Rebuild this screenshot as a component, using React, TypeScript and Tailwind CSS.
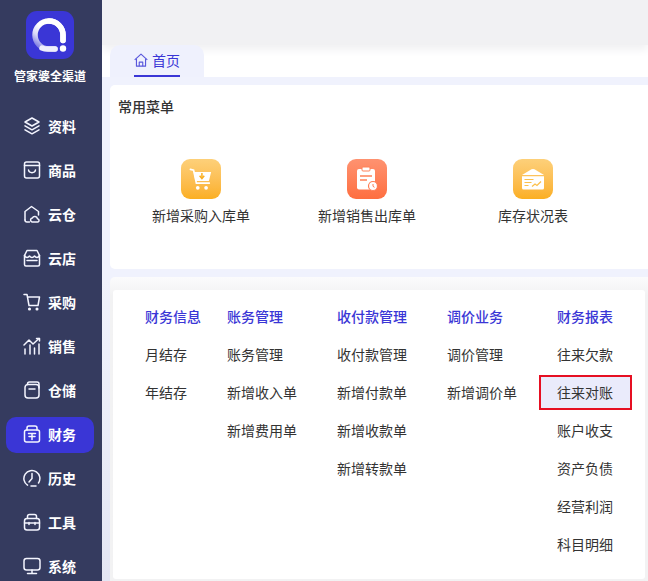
import React from "react";

const font = { fontFamily: '"Noto Sans CJK SC", sans-serif' };

const S = ({ children }: { children: React.ReactNode }) => (
  <svg width="18" height="18" viewBox="1 1 18 18" fill="none" stroke="currentColor" strokeWidth="1.5" strokeLinecap="round" strokeLinejoin="round" className="text-[#f4f5ff] shrink-0">
    {children}
  </svg>
);

const navIcons: Record<string, React.ReactNode> = {
  资料: <S><path d="M10 2 17 6 10 10 3 6Z" /><path d="M3 9.800 10 13.800 17 9.800" /><path d="M3 13.800 10 17.800 17 13.800" /></S>,
  商品: <S><rect x="2.500" y="2" width="15" height="16" rx="2" /><path d="M2.500 5.500h15" /><path d="M6.500 10c.5 3.500 6.500 3.500 7 0" /></S>,
  云仓: <S><path d="M3 16V7.500L9.500 2.500l7 5V11" /><path d="M3 16q0 2 2 2h2.500" /><path d="M10 18a2 2 0 0 1 .3-3.900 2.800 2.800 0 0 1 5.200.6 1.700 1.700 0 0 1 .4 3.300Z" /></S>,
  云店: <S><path d="M5 2.500h10l2.500 5v9a1.500 1.500 0 0 1-1.500 1.500H4a1.500 1.500 0 0 1-1.500-1.500v-9Z" /><path d="M2.500 7.500c1.500 2.500 3.500 2.500 5 .5 1.500 2 3.500 2 5 0 1.500 2 3.500 2 5-.5" /><path d="M5 12.500h10" /></S>,
  采购: <S><path d="M2 2.500h3l2 11h9l1.500-8.500H5.500" /><circle cx="7.500" cy="17" r="0.800" /><circle cx="15" cy="17" r="0.800" /></S>,
  销售: <S><path d="M2 9 7 4l4 4 6-5.500" /><path d="M14.500 2.500H17.500V5" /><path d="M3 13v5M8 9v9M12.500 12v6M17 8v10" /></S>,
  仓储: <S><rect x="3" y="4.500" width="14" height="13.500" rx="3" /><path d="M5.500 4.500V4Q5.500 2 7.500 2H15q2 0 2 2v4" /><path d="M7 9h6" /></S>,
  财务: <S><rect x="2.500" y="6" width="15" height="12" rx="2" /><path d="M5 6V4q0-2 2-2h6q2 0 2 2v2" /><path d="M6.500 9.500h7M7 12.500h6M10 9.500v6" /></S>,
  历史: <S><path d="M5.500 17.200A8 8 0 1 1 16.500 15" /><path d="M10 5.500V10.500L7 14" /><path d="M9 18h5" /></S>,
  工具: <S><rect x="2.500" y="6.500" width="15" height="11.500" rx="2.500" /><path d="M5.500 6.500V4.500Q5.500 2.500 7.500 2.500h5q2 0 2 2v2" /><path d="M2.500 11h15M7 10.500v2M13 10.500v2" /></S>,
  系统: <S><rect x="2" y="2.500" width="16" height="11.500" rx="2.500" /><path d="M10 14v3.500M5.500 17.500h9" /></S>,
};

const navItems = ["资料", "商品", "云仓", "云店", "采购", "销售", "仓储", "财务", "历史", "工具", "系统"];

const columns = [
  { title: "财务信息", width: "w-[82px]", items: ["月结存", "年结存"] },
  { title: "账务管理", width: "w-[110px]", items: ["账务管理", "新增收入单", "新增费用单"] },
  { title: "收付款管理", width: "w-[110px]", items: ["收付款管理", "新增付款单", "新增收款单", "新增转款单"] },
  { title: "调价业务", width: "w-[110px]", items: ["调价管理", "新增调价单"] },
  { title: "财务报表", width: "w-[80px]", items: ["往来欠款", "往来对账", "账户收支", "资产负债", "经营利润", "科目明细"] },
];

const Shortcut = ({ label, from, to, children }: { label: string; from: string; to: string; children: React.ReactNode }) => (
  <div className="w-[166px] flex flex-col items-center">
    <div className={`w-10 h-10 rounded-[9px] bg-gradient-to-b ${from} ${to} flex items-center justify-center`}>{children}</div>
    <div className="mt-[6px] text-[14px] leading-[20px] text-[#333]">{label}</div>
  </div>
);

export default function App() {
  return (
    <div style={font} className="w-[648px] h-[581px] flex overflow-hidden bg-white">
      <aside className="relative z-10 w-[102px] shrink-0 bg-[#353b5f] pr-[2px] flex flex-col items-center text-white">
        <div className="mt-[11px] w-12 h-12 rounded-[11px] bg-[#3a36d6]">
          <svg width="48" height="48" viewBox="0 0 48 48" fill="none">
            <defs>
              <linearGradient id="lg" x1="0.1" y1="0.9" x2="0.6" y2="0.2">
                <stop offset="0" stopColor="#8482e4" />
                <stop offset="0.35" stopColor="#d9d9f7" />
                <stop offset="0.75" stopColor="#ffffff" />
              </linearGradient>
            </defs>
            <path d="M37 29.500V24A14 14 0 1 0 23 38H29" stroke="url(#lg)" strokeWidth="5.500" strokeLinecap="round" />
            <path d="M37 29.500V24A14 14 0 0 0 23 10" stroke="#ffffff" strokeWidth="5.500" strokeLinecap="round" />
            <path d="M16 37 A14 14 0 0 0 23 38H29" stroke="#eeeefc" strokeWidth="5.500" strokeLinecap="round" />
            <circle cx="37" cy="37.500" r="3.200" fill="#fff" />
          </svg>
        </div>
        <div className="mt-[8px] text-[12px] leading-[18px] font-bold whitespace-nowrap">管家婆全渠道</div>
        <nav className="mt-[24px] w-full flex flex-col gap-2">
          {navItems.map((n) => (
            <div key={n} className={`mx-[6px] h-9 shrink-0 rounded-[10px] flex items-center pl-[17px] gap-[7px] ${n === "财务" ? "bg-[#3a36d6]" : ""}`}>
              <span className="-mt-[2px]">{navIcons[n]}</span>
              <span className="-mt-[2px] text-[14px] font-bold leading-5">{n}</span>
            </div>
          ))}
        </nav>
      </aside>

      <main className="flex-1 min-w-0 flex flex-col">
        <div className="h-[45px] shrink-0 bg-[#f1f1f3] shadow-[0_5px_8px_#f1f1f3]"></div>
        <div className="relative h-[32px] shrink-0 pl-[8px] flex">
          <div className="w-[94px] h-full rounded-t-[10px] bg-[#eff1fd] flex justify-center">
            <div className="h-full w-[46px] border-b-[2px] border-[#3a36d6] flex items-center gap-[4px] text-[#3a36d6] text-[14px] leading-5 whitespace-nowrap">
              <svg width="14" height="14" viewBox="0 0 16 16" fill="none" stroke="#5a58dc" strokeWidth="1.300" strokeLinejoin="round" className="shrink-0">
                <path d="M0.800 7.800 8 1.200l7.200 6.600" />
                <path d="M2.800 6.500V15h10.400V6.500" />
                <path d="M6 15V10.500h4V15" />
              </svg>
              <span>首页</span>
            </div>
          </div>
        </div>
        <div className="flex-1 min-h-0 pl-[8px] pt-[8px] flex flex-col bg-gradient-to-b from-[#f0f2fd] from-[40%] to-[#e4e6f4]">
          <section className="h-[184px] shrink-0 bg-white rounded-l-[5px]">
            <h2 className="pt-[11px] pl-[8px] text-[14px] leading-5 font-medium text-[#333]">常用菜单</h2>
            <div className="mt-[43px] pl-[8px] flex">
              <Shortcut label="新增采购入库单" from="from-[#fdd079]" to="to-[#fbaf1f]">
                <svg width="24" height="25" viewBox="0 0 26 26" fill="none">
                  <path d="M1.500 2 5 3l3 14h14" stroke="#fff" strokeWidth="1.800" strokeLinecap="round" />
                  <path d="M5 5h19l-2.500 9.500H7Z" fill="#fff" />
                  <path d="M14 6v4M11.500 9 14 12 16.500 9" stroke="#fbaf1f" strokeWidth="1.600" />
                  <circle cx="9.500" cy="22" r="2" fill="#fff" />
                  <circle cx="18.500" cy="22" r="2" fill="#fff" />
                </svg>
              </Shortcut>
              <Shortcut label="新增销售出库单" from="from-[#fe9270]" to="to-[#fe6e3f]">
                <svg width="24" height="26" viewBox="0 0 24 26" fill="none">
                  <path d="M4 3h14a2 2 0 0 1 2 2v13.500l-5 5H4a2 2 0 0 1-2-2V5a2 2 0 0 1 2-2Z" fill="#fff" />
                  <rect x="7" y="1" width="8" height="4" rx="1" fill="#fff" stroke="#fe8158" />
                  <path d="M5 10h12M5 14h7" stroke="#fe8158" strokeWidth="1.500" />
                  <circle cx="18" cy="20" r="4.500" fill="#fff" stroke="#fe7d54" strokeWidth="1.200" />
                  <path d="M18 18v2.300l1.500 1" stroke="#fe7d54" strokeWidth="1" />
                </svg>
              </Shortcut>
              <Shortcut label="库存状况表" from="from-[#fdd079]" to="to-[#fbaf1f]">
                <svg width="24" height="22" viewBox="0 0 24 22" fill="none">
                  <path d="M1 7 10.500 1.300q1.500-.8 3 0L23 7Z" fill="#fff" />
                  <path d="M1 8.200h22V20a1.500 1.500 0 0 1-1.500 1.500h-19A1.500 1.500 0 0 1 1 20Z" fill="#fff" />
                  <path d="M3.500 11.500h9M3.500 14.500h7M3.500 17.500h4" stroke="#fcc04c" strokeWidth="1.200" />
                  <path d="M11 18.500l3-2.500 2 1.500 4-4" stroke="#fcc04c" strokeWidth="1.300" />
                </svg>
              </Shortcut>
            </div>
          </section>
          <div className="h-[8px] shrink-0"></div>
          <div className="flex-1 min-h-0 rounded-tl-[5px] bg-gradient-to-b from-[#fbfbfc] to-[#f2f2f3] to-[6%] pt-[13px] px-[3px] pb-[2px]">
            <section className="bg-white h-full rounded-[3px] flex pl-[32px]">
              {columns.map((c) => (
                <div key={c.title} className={`${c.width} shrink-0 pt-[16px]`}>
                  <div className="text-[14px] leading-5 font-medium text-[#3a36d6] whitespace-nowrap">{c.title}</div>
                  <div className="mt-[18px] flex flex-col gap-[18px]">
                    {c.items.map((it) => (
                      <div key={it} className="relative text-[14px] leading-5 text-[#333] whitespace-nowrap">
                        {it === "往来对账" && (
                          <div className="absolute -left-[18px] -top-[7px] w-[93px] h-[35px] bg-[#eaebfb] border-2 border-[#e60f22]"></div>
                        )}
                        <span className="relative">{it}</span>
                      </div>
                    ))}
                  </div>
                </div>
              ))}
            </section>
          </div>
        </div>
      </main>
    </div>
  );
}
